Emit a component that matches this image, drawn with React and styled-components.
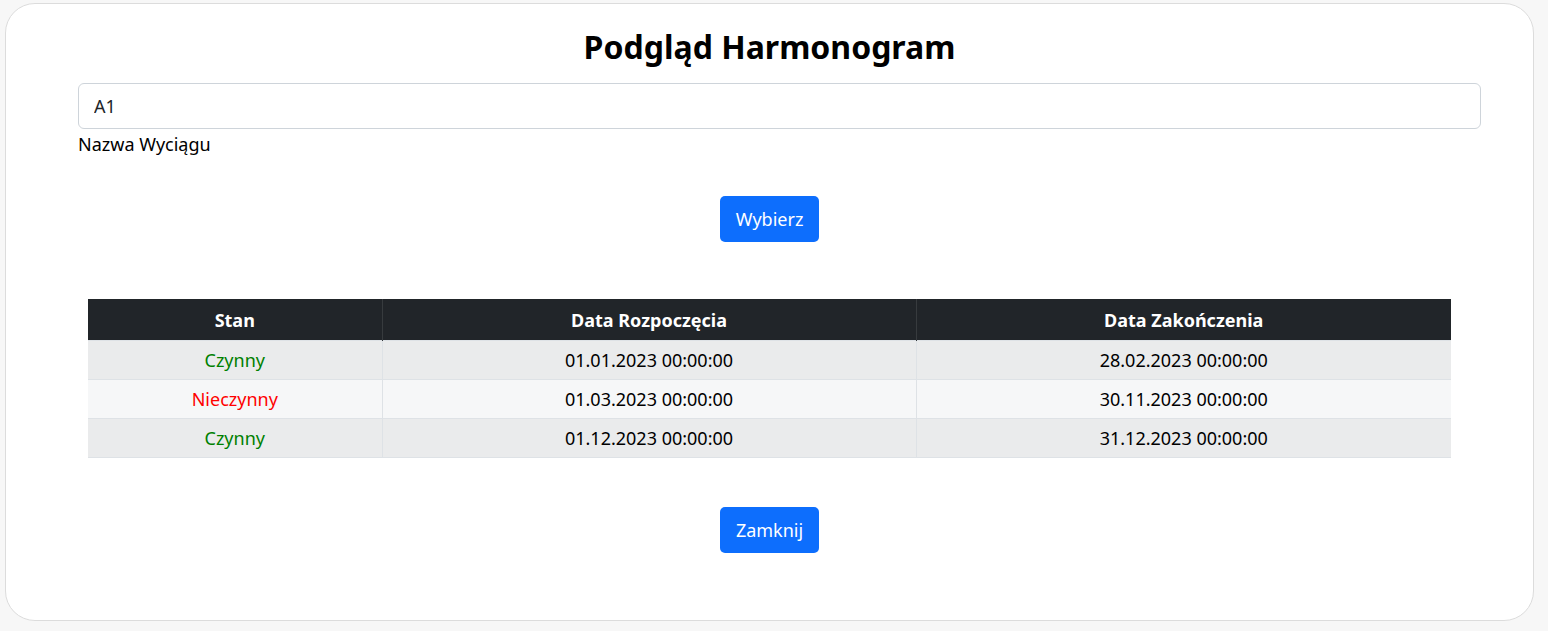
import React from "react";
import styled, { createGlobalStyle } from "styled-components";

const GlobalStyle = createGlobalStyle`
  body {
    margin: 0;
    background: #f7f7f7;
    font-family: "Noto Sans", "Open Sans", sans-serif;
    color: #212529;
  }
`;

const Card = styled.div`
  box-sizing: border-box;
  margin: 3px 14px 0 5px;
  height: 618px;
  background: #fff;
  border: 1px solid #dcdcdc;
  border-radius: 30px;
  padding: 24px 72px 0 72px;
  display: flex;
  flex-direction: column;
`;

const Title = styled.h1`
  margin: 0;
  font-size: 32px;
  font-weight: 700;
  line-height: 38px;
  text-align: center;
  color: #000;
`;

const Field = styled.div`
  margin: 17px -20px 0 0;
  display: flex;
  flex-direction: column;
`;

const Input = styled.input`
  box-sizing: border-box;
  height: 46px;
  width: 100%;
  padding: 0 15px;
  border: 1px solid #ced4da;
  border-radius: 6px;
  font-family: inherit;
  font-size: 18px;
  color: #212529;
  outline: none;
`;

const Label = styled.label`
  font-size: 18px;
  line-height: 27px;
  margin-top: 2px;
  color: #000;
`;

const Center = styled.div`
  display: flex;
  justify-content: center;
  margin-top: ${(p) => p.$top}px;
`;

const Button = styled.button`
  box-sizing: border-box;
  width: 99px;
  height: 46px;
  border: none;
  border-radius: 5px;
  background: #0d6efd;
  color: #fff;
  font-family: inherit;
  font-size: 18px;
  cursor: pointer;
`;

const Table = styled.table`
  width: 1363px;
  margin: 57px 0 0 10px;
  border-collapse: collapse;
  table-layout: fixed;
  font-size: 18px;
  text-align: center;
  border-bottom: 1px solid #dee2e6;

  th {
    background: #212529;
    color: #fff;
    font-weight: 700;
    height: 41px;
    padding: 0;
    line-height: 24px;
    border-left: 1px solid #373b3e;
  }

  td {
    height: 38px;
    padding: 0;
    line-height: 24px;
    border-top: 1px solid #dee2e6;
    border-left: 1px solid #dee2e6;
    color: #000;
  }

  th:first-child,
  td:first-child {
    border-left: none;
  }

  tbody tr:nth-child(odd) td {
    background: #eaebec;
  }

  tbody tr:nth-child(even) td {
    background: #f6f7f8;
  }
`;

const Status = styled.td`
  && {
    color: ${(p) => (p.$on ? "#008000" : "#ff0000")};
  }
`;

const rows = [
  { on: true, from: "01.01.2023 00:00:00", to: "28.02.2023 00:00:00" },
  { on: false, from: "01.03.2023 00:00:00", to: "30.11.2023 00:00:00" },
  { on: true, from: "01.12.2023 00:00:00", to: "31.12.2023 00:00:00" },
];

const App = () => {
  return (
    <>
      <GlobalStyle />
      <Card>
        <Title>Podgląd Harmonogram</Title>
        <Field>
          <Input defaultValue="A1" />
          <Label>Nazwa Wyciągu</Label>
        </Field>
        <Center $top={38}>
          <Button>Wybierz</Button>
        </Center>
        <Table>
          <colgroup>
            <col style={{ width: 294 }} />
            <col style={{ width: 534 }} />
            <col style={{ width: 535 }} />
          </colgroup>
          <thead>
            <tr>
              <th>Stan</th>
              <th>Data Rozpoczęcia</th>
              <th>Data Zakończenia</th>
            </tr>
          </thead>
          <tbody>
            {rows.map((r, i) => (
              <tr key={i}>
                <Status $on={r.on}>{r.on ? "Czynny" : "Nieczynny"}</Status>
                <td>{r.from}</td>
                <td>{r.to}</td>
              </tr>
            ))}
          </tbody>
        </Table>
        <Center $top={49}>
          <Button>Zamknij</Button>
        </Center>
      </Card>
    </>
  );
};

export default App;
